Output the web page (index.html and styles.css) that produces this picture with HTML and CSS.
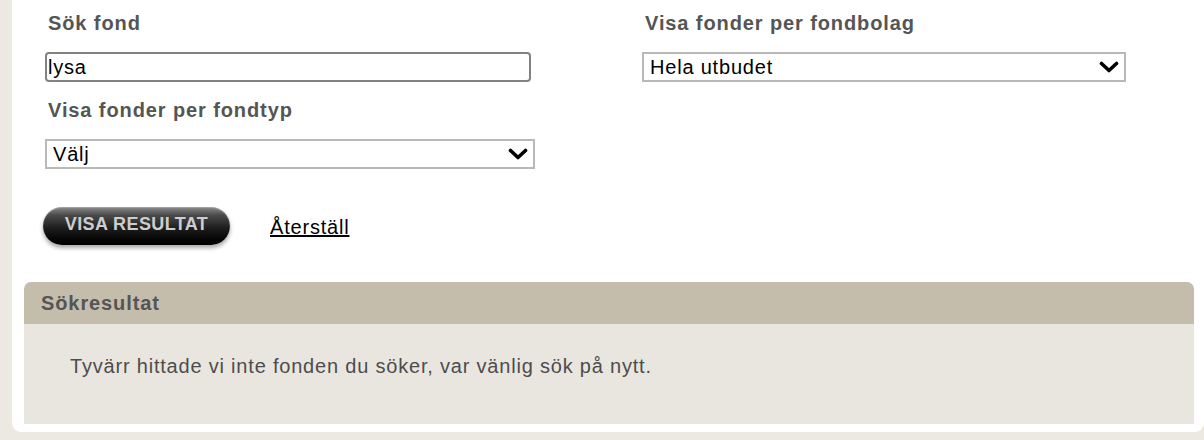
FILE: index.html
```html
<!DOCTYPE html>
<html lang="sv">

<head>
    <meta charset="UTF-8" />
    <meta name="viewport" content="width=device-width, initial-scale=1.0" />
    <title>Sök fond</title>
    <link rel="stylesheet" href="styles.css">
</head>

<body>
    <div class="panel">
        <div class="form-grid">
            <div class="field">
                <label for="fundSearch">Sök fond</label>
                <input type="text" id="fundSearch" class="text-input" value="lysa" />
            </div>

            <div class="field">
                <label for="fundCompany">Visa fonder per fondbolag</label>
                <div class="select-wrap">
                    <select id="fundCompany">
                        <option>Hela utbudet</option>
                    </select>
                    <svg class="chevron" viewBox="0 0 20 12" width="20" height="12">
                        <path d="M2.5 2.5 L10 9.5 L17.5 2.5" fill="none" stroke="#000" stroke-width="3.6" stroke-linecap="round" stroke-linejoin="round" />
                    </svg>
                </div>
            </div>

            <div class="field">
                <label for="fundType">Visa fonder per fondtyp</label>
                <div class="select-wrap">
                    <select id="fundType">
                        <option>Välj</option>
                    </select>
                    <svg class="chevron" viewBox="0 0 20 12" width="20" height="12">
                        <path d="M2.5 2.5 L10 9.5 L17.5 2.5" fill="none" stroke="#000" stroke-width="3.6" stroke-linecap="round" stroke-linejoin="round" />
                    </svg>
                </div>
            </div>
        </div>

        <div class="actions">
            <button class="btn-result">VISA RESULTAT</button>
            <a href="#" class="reset-link">Återställ</a>
        </div>

        <div class="results">
            <div class="results-header">Sökresultat</div>
            <div class="results-body">
                Tyvärr hittade vi inte fonden du söker, var vänlig sök på nytt.
            </div>
        </div>
    </div>
</body>

</html>
```

FILE: styles.css
```css
* {
    box-sizing: border-box;
    margin: 0;
    padding: 0;
}

body {
    font-family: 'Liberation Sans', Arial, sans-serif;
    background: #ebe9e1;
    color: #555;
    overflow: hidden;
}

.panel {
    margin-left: 12px;
    width: 1192px;
    background: #fff;
    border-radius: 0 0 9px 9px;
    padding: 12px 10px 8px 12px;
}

.form-grid {
    display: grid;
    grid-template-columns: 490px 484px;
    column-gap: 107px;
    row-gap: 17px;
    padding-left: 21px;
}

.field label {
    display: block;
    font-size: 20px;
    font-weight: bold;
    letter-spacing: 0.9px;
    line-height: 22px;
    color: #555;
    padding-left: 3px;
    margin-bottom: 18px;
}

.text-input {
    display: block;
    width: 486px;
    height: 30px;
    border: 2px solid #828282;
    border-radius: 4px;
    padding: 0 1px;
    font-family: inherit;
    font-size: 20px;
    letter-spacing: 0.8px;
    color: #000;
    outline: none;
}

.select-wrap {
    position: relative;
}

.select-wrap select {
    display: block;
    width: 100%;
    height: 30px;
    border: 2px solid #b9b9b9;
    border-radius: 0;
    background: #fff;
    padding: 0 30px 0 6px;
    font-family: inherit;
    font-size: 20px;
    letter-spacing: 0.8px;
    color: #000;
    appearance: none;
    -webkit-appearance: none;
    outline: none;
}

.chevron {
    position: absolute;
    right: 7px;
    top: 9px;
    pointer-events: none;
}

.actions {
    display: flex;
    align-items: center;
    gap: 40px;
    margin-top: 38px;
    padding-left: 19px;
}

.btn-result {
    width: 187px;
    height: 38px;
    border: none;
    border-radius: 19px;
    background: linear-gradient(to bottom, #8a8a8a 0%, #4a4a4a 22%, #1e1e1e 55%, #050505 85%, #000 100%);
    box-shadow: 0 3px 4px rgba(0, 0, 0, 0.35), inset 0 1px 1px rgba(255, 255, 255, 0.25);
    color: #cdcdcd;
    font-family: inherit;
    font-size: 18px;
    font-weight: bold;
    letter-spacing: 0.4px;
    padding-bottom: 3px;
    cursor: pointer;
}

.reset-link {
    color: #000;
    font-size: 20px;
    letter-spacing: 0.8px;
    text-decoration: underline;
    margin-top: 3px;
}

.results {
    margin-top: 37px;
}

.results-header {
    height: 42px;
    background: #c4bdab;
    border-radius: 7px 7px 0 0;
    padding-left: 17px;
    font-size: 20px;
    font-weight: bold;
    letter-spacing: 0.9px;
    line-height: 42px;
    color: #555;
}

.results-body {
    height: 100px;
    background: #e9e6df;
    padding: 30px 0 0 46px;
    font-size: 20px;
    letter-spacing: 0.8px;
    line-height: 24px;
    color: #4d4d4d;
}
```
